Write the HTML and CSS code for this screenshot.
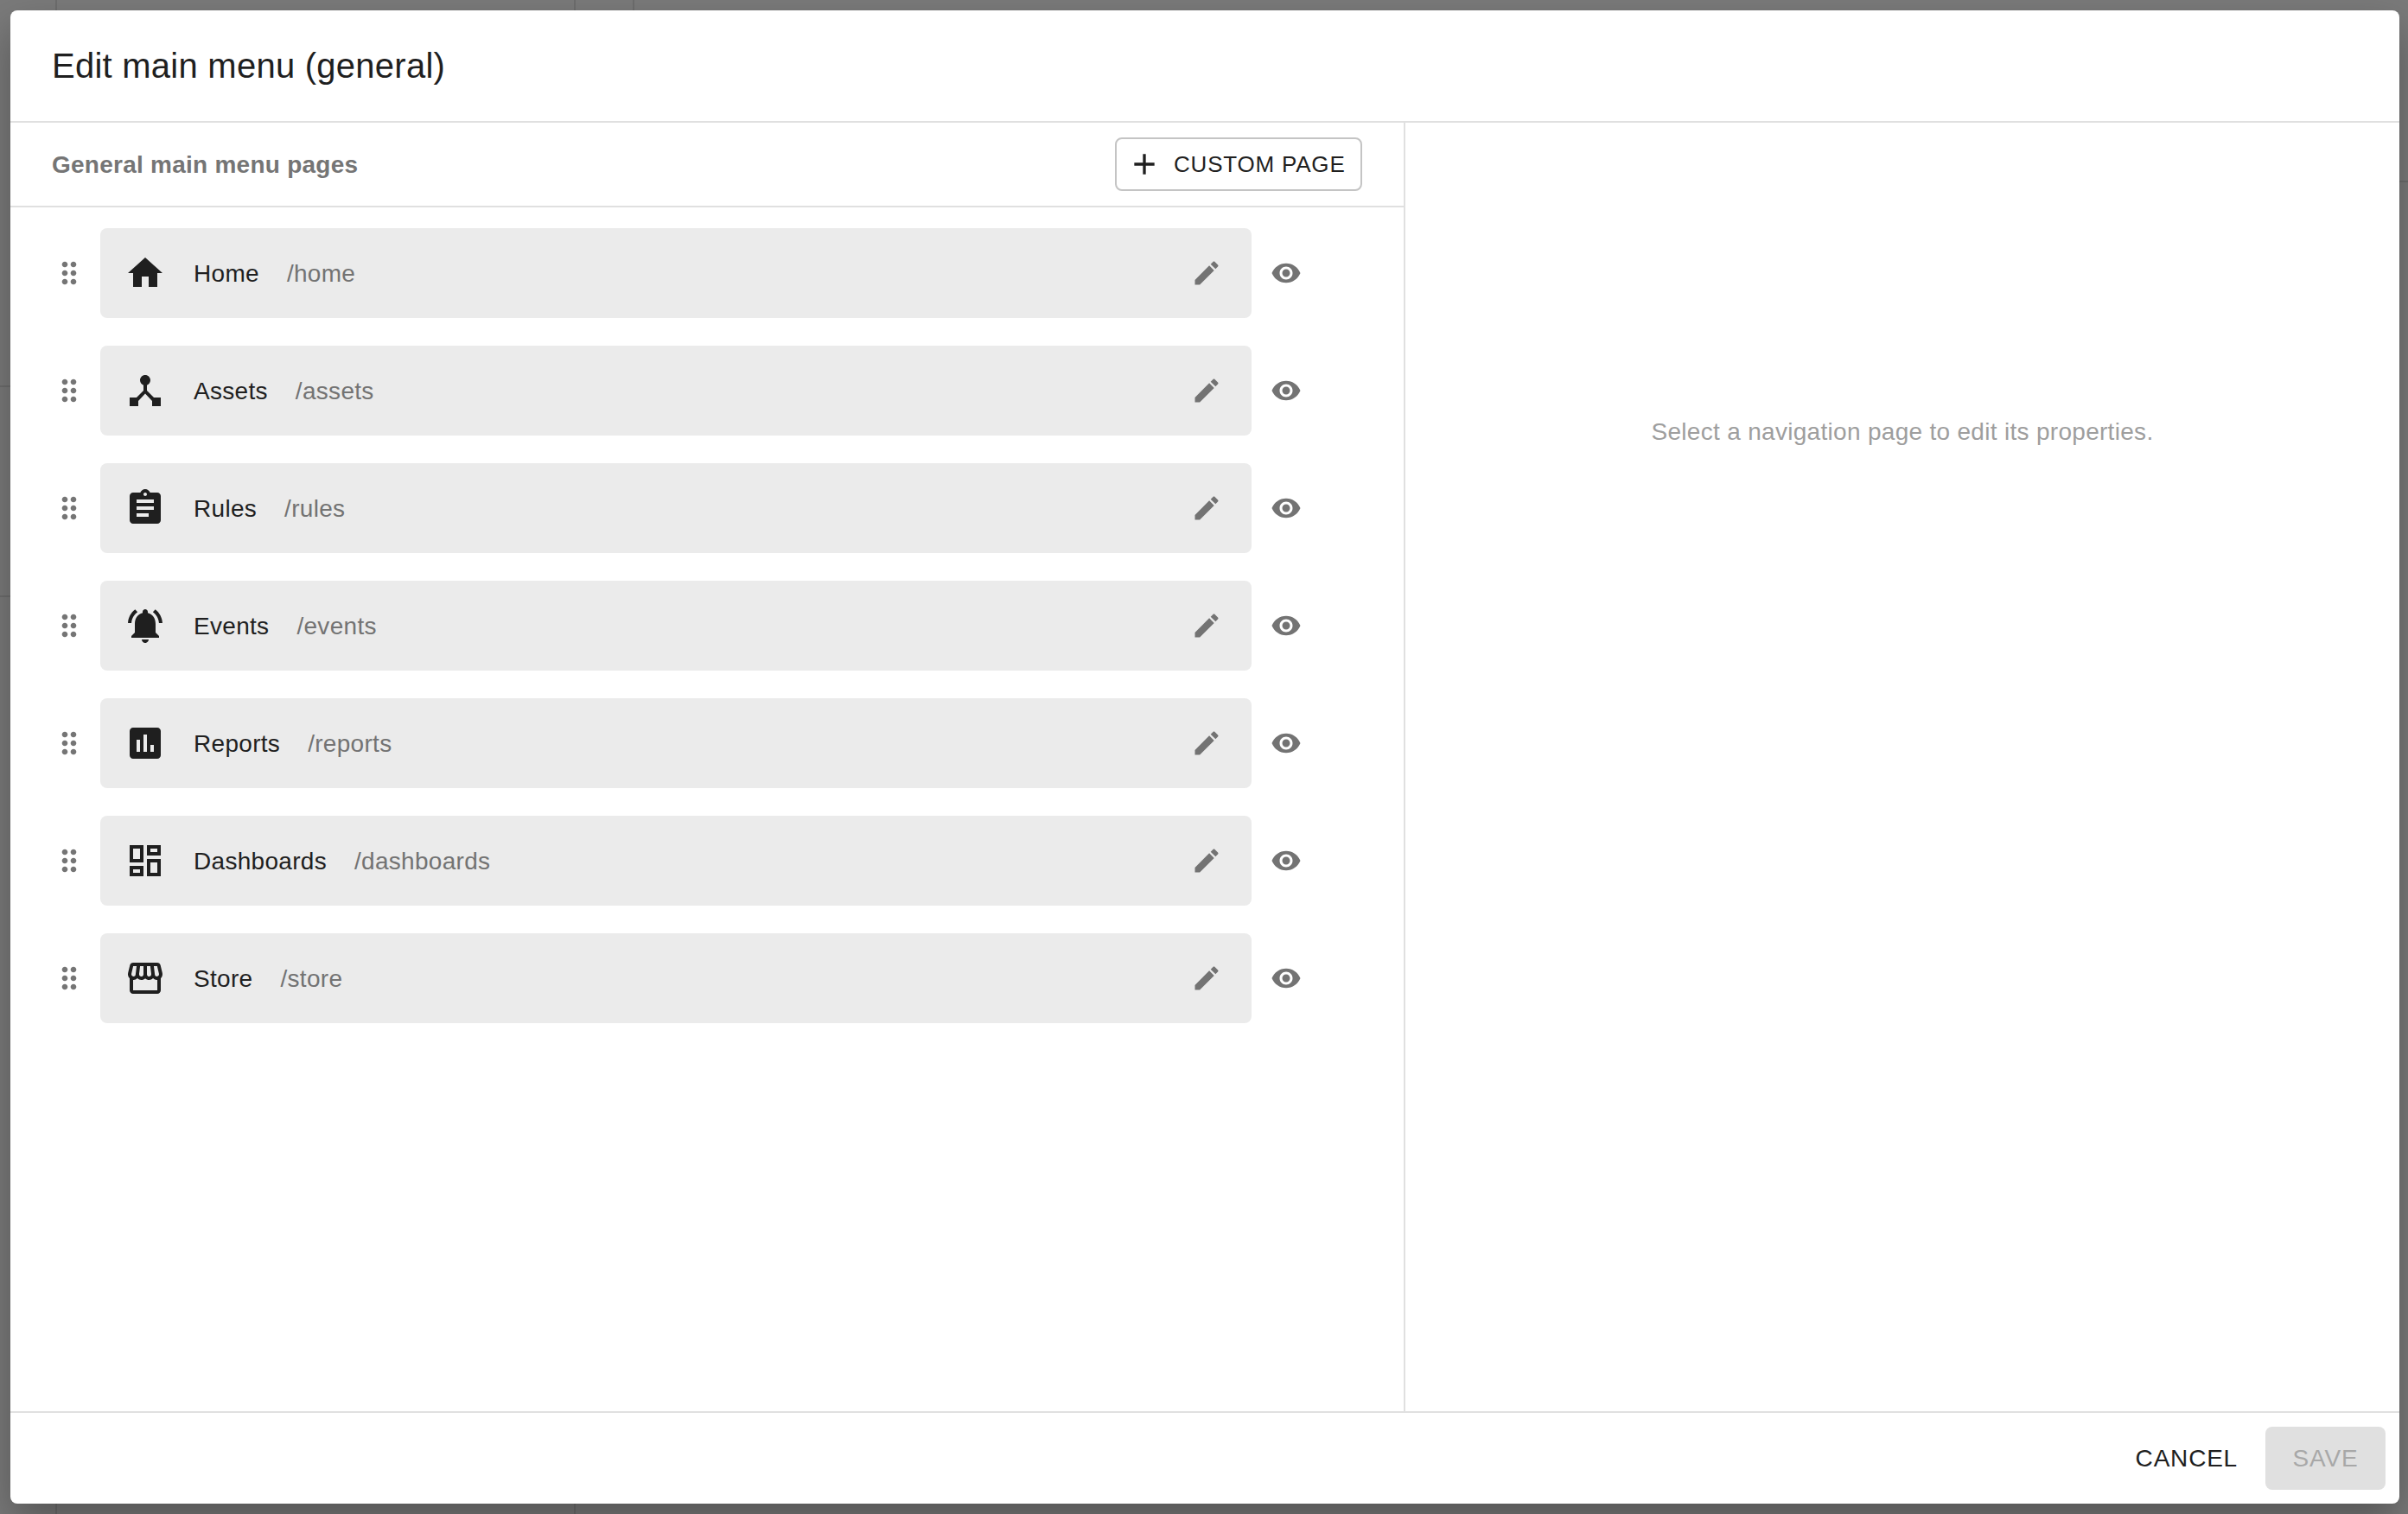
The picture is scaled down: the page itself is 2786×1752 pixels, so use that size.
FILE: index.html
```html
<!DOCTYPE html>
<html lang="en">
<head>
  <meta charset="UTF-8">
  <title>Edit main menu</title>
  <link rel="stylesheet" href="styles.css">
</head>
<body>
  <div class="backdrop">
    <div class="bg-line bg-line-a"></div>
    <div class="bg-line bg-line-b"></div>
    <div class="bg-line bg-line-c"></div>
    <div class="bg-rule bg-rule-a"></div>
    <div class="bg-rule bg-rule-b"></div>
    <div class="bg-rule bg-rule-c"></div>
    <div class="dialog">
      <div class="dialog-title">Edit main menu (general)</div>
      <div class="dialog-body">
        <div class="left-panel">
          <div class="panel-head">
            <span class="panel-label">General main menu pages</span>
            <button class="btn-outline">
              <svg class="icon-add" viewBox="0 0 24 24"><path d="M19 13h-6v6h-2v-6H5v-2h6V5h2v6h6v2z"/></svg>
              <span>CUSTOM PAGE</span>
            </button>
          </div>
          <div class="page-list">

            <div class="page-row">
              <svg class="icon-drag" viewBox="0 0 24 24"><path d="M11 18c0 1.100-.9 2-2 2s-2-.9-2-2 .9-2 2-2 2 .9 2 2zm-2-8c-1.100 0-2 .9-2 2s.9 2 2 2 2-.9 2-2-.9-2-2-2zm0-6c-1.100 0-2 .9-2 2s.9 2 2 2 2-.9 2-2-.9-2-2-2zm6 4c1.100 0 2-.9 2-2s-.9-2-2-2-2 .9-2 2 .9 2 2 2zm0 2c-1.100 0-2 .9-2 2s.9 2 2 2 2-.9 2-2-.9-2-2-2zm0 6c-1.100 0-2 .9-2 2s.9 2 2 2 2-.9 2-2-.9-2-2-2z"/></svg>
              <div class="page-card">
                <svg class="icon-page" viewBox="0 0 24 24"><path d="M10 20v-6h4v6h5v-8h3L12 3 2 12h3v8z"/></svg>
                <span class="page-name">Home</span>
                <span class="page-path">/home</span>
                <svg class="icon-edit" viewBox="0 0 24 24"><path d="M3 17.250V21h3.750L17.810 9.940l-3.750-3.750L3 17.250zM20.710 7.040c.39-.39.39-1.020 0-1.410l-2.340-2.340c-.39-.39-1.020-.39-1.410 0l-1.830 1.830 3.750 3.750 1.830-1.830z"/></svg>
              </div>
              <svg class="icon-eye" viewBox="0 0 24 24"><path d="M12 4.500C7 4.500 2.730 7.610 1 12c1.730 4.390 6 7.500 11 7.500s9.270-3.110 11-7.500c-1.730-4.390-6-7.500-11-7.500zM12 17c-2.760 0-5-2.240-5-5s2.240-5 5-5 5 2.240 5 5-2.240 5-5 5zm0-8c-1.660 0-3 1.340-3 3s1.340 3 3 3 3-1.340 3-3-1.340-3-3-3z"/></svg>
            </div>

            <div class="page-row">
              <svg class="icon-drag" viewBox="0 0 24 24"><path d="M11 18c0 1.100-.9 2-2 2s-2-.9-2-2 .9-2 2-2 2 .9 2 2zm-2-8c-1.100 0-2 .9-2 2s.9 2 2 2 2-.9 2-2-.9-2-2-2zm0-6c-1.100 0-2 .9-2 2s.9 2 2 2 2-.9 2-2-.9-2-2-2zm6 4c1.100 0 2-.9 2-2s-.9-2-2-2-2 .9-2 2 .9 2 2 2zm0 2c-1.100 0-2 .9-2 2s.9 2 2 2 2-.9 2-2-.9-2-2-2zm0 6c-1.100 0-2 .9-2 2s.9 2 2 2 2-.9 2-2-.9-2-2-2z"/></svg>
              <div class="page-card">
                <svg class="icon-page" viewBox="0 0 24 24"><path d="M17 16l-4-4V8.820C14.160 8.400 15 7.300 15 6c0-1.660-1.340-3-3-3S9 4.340 9 6c0 1.300.84 2.400 2 2.820V12l-4 4H3v5h5v-3.050l4-4.200 4 4.200V21h5v-5h-4z"/></svg>
                <span class="page-name">Assets</span>
                <span class="page-path">/assets</span>
                <svg class="icon-edit" viewBox="0 0 24 24"><path d="M3 17.250V21h3.750L17.810 9.940l-3.750-3.750L3 17.250zM20.710 7.040c.39-.39.39-1.020 0-1.410l-2.340-2.340c-.39-.39-1.020-.39-1.410 0l-1.830 1.830 3.750 3.750 1.830-1.830z"/></svg>
              </div>
              <svg class="icon-eye" viewBox="0 0 24 24"><path d="M12 4.500C7 4.500 2.730 7.610 1 12c1.730 4.390 6 7.500 11 7.500s9.270-3.110 11-7.500c-1.730-4.390-6-7.500-11-7.500zM12 17c-2.760 0-5-2.240-5-5s2.240-5 5-5 5 2.240 5 5-2.240 5-5 5zm0-8c-1.660 0-3 1.340-3 3s1.340 3 3 3 3-1.340 3-3-1.340-3-3-3z"/></svg>
            </div>

            <div class="page-row">
              <svg class="icon-drag" viewBox="0 0 24 24"><path d="M11 18c0 1.100-.9 2-2 2s-2-.9-2-2 .9-2 2-2 2 .9 2 2zm-2-8c-1.100 0-2 .9-2 2s.9 2 2 2 2-.9 2-2-.9-2-2-2zm0-6c-1.100 0-2 .9-2 2s.9 2 2 2 2-.9 2-2-.9-2-2-2zm6 4c1.100 0 2-.9 2-2s-.9-2-2-2-2 .9-2 2 .9 2 2 2zm0 2c-1.100 0-2 .9-2 2s.9 2 2 2 2-.9 2-2-.9-2-2-2zm0 6c-1.100 0-2 .9-2 2s.9 2 2 2 2-.9 2-2-.9-2-2-2z"/></svg>
              <div class="page-card">
                <svg class="icon-page" viewBox="0 0 24 24"><path d="M19 3h-4.180C14.400 1.840 13.300 1 12 1c-1.300 0-2.400.84-2.820 2H5c-1.100 0-2 .9-2 2v14c0 1.100.9 2 2 2h14c1.100 0 2-.9 2-2V5c0-1.100-.9-2-2-2zm-7 0c.55 0 1 .45 1 1s-.45 1-1 1-1-.45-1-1 .45-1 1-1zm2 14H7v-2h7v2zm3-4H7v-2h10v2zm0-4H7V7h10v2z"/></svg>
                <span class="page-name">Rules</span>
                <span class="page-path">/rules</span>
                <svg class="icon-edit" viewBox="0 0 24 24"><path d="M3 17.250V21h3.750L17.810 9.940l-3.750-3.750L3 17.250zM20.710 7.040c.39-.39.39-1.020 0-1.410l-2.340-2.340c-.39-.39-1.020-.39-1.410 0l-1.830 1.830 3.750 3.750 1.830-1.830z"/></svg>
              </div>
              <svg class="icon-eye" viewBox="0 0 24 24"><path d="M12 4.500C7 4.500 2.730 7.610 1 12c1.730 4.390 6 7.500 11 7.500s9.270-3.110 11-7.500c-1.730-4.390-6-7.500-11-7.500zM12 17c-2.760 0-5-2.240-5-5s2.240-5 5-5 5 2.240 5 5-2.240 5-5 5zm0-8c-1.660 0-3 1.340-3 3s1.340 3 3 3 3-1.340 3-3-1.340-3-3-3z"/></svg>
            </div>

            <div class="page-row">
              <svg class="icon-drag" viewBox="0 0 24 24"><path d="M11 18c0 1.100-.9 2-2 2s-2-.9-2-2 .9-2 2-2 2 .9 2 2zm-2-8c-1.100 0-2 .9-2 2s.9 2 2 2 2-.9 2-2-.9-2-2-2zm0-6c-1.100 0-2 .9-2 2s.9 2 2 2 2-.9 2-2-.9-2-2-2zm6 4c1.100 0 2-.9 2-2s-.9-2-2-2-2 .9-2 2 .9 2 2 2zm0 2c-1.100 0-2 .9-2 2s.9 2 2 2 2-.9 2-2-.9-2-2-2zm0 6c-1.100 0-2 .9-2 2s.9 2 2 2 2-.9 2-2-.9-2-2-2z"/></svg>
              <div class="page-card">
                <svg class="icon-page" viewBox="0 0 24 24"><path d="M7.580 4.080L6.150 2.650C3.750 4.480 2.170 7.300 2.030 10.500h2c.15-2.650 1.510-4.970 3.550-6.420zm12.390 6.420h2c-.15-3.200-1.730-6.020-4.120-7.850l-1.420 1.430c2.020 1.450 3.390 3.770 3.540 6.420zM18 11c0-3.070-1.640-5.640-4.500-6.320V4c0-.83-.67-1.500-1.500-1.500s-1.500.67-1.500 1.500v.68C7.630 5.360 6 7.920 6 11v5l-2 2v1h16v-1l-2-2v-5zm-6 11c.14 0 .27-.01.4-.04.65-.14 1.180-.58 1.440-1.180.1-.24.15-.5.15-.78h-4c.01 1.100.9 2 2.010 2z"/></svg>
                <span class="page-name">Events</span>
                <span class="page-path">/events</span>
                <svg class="icon-edit" viewBox="0 0 24 24"><path d="M3 17.250V21h3.750L17.810 9.940l-3.750-3.750L3 17.250zM20.710 7.040c.39-.39.39-1.020 0-1.410l-2.340-2.340c-.39-.39-1.020-.39-1.410 0l-1.830 1.830 3.750 3.750 1.830-1.830z"/></svg>
              </div>
              <svg class="icon-eye" viewBox="0 0 24 24"><path d="M12 4.500C7 4.500 2.730 7.610 1 12c1.730 4.390 6 7.500 11 7.500s9.270-3.110 11-7.500c-1.730-4.390-6-7.500-11-7.500zM12 17c-2.760 0-5-2.240-5-5s2.240-5 5-5 5 2.240 5 5-2.240 5-5 5zm0-8c-1.660 0-3 1.340-3 3s1.340 3 3 3 3-1.340 3-3-1.340-3-3-3z"/></svg>
            </div>

            <div class="page-row">
              <svg class="icon-drag" viewBox="0 0 24 24"><path d="M11 18c0 1.100-.9 2-2 2s-2-.9-2-2 .9-2 2-2 2 .9 2 2zm-2-8c-1.100 0-2 .9-2 2s.9 2 2 2 2-.9 2-2-.9-2-2-2zm0-6c-1.100 0-2 .9-2 2s.9 2 2 2 2-.9 2-2-.9-2-2-2zm6 4c1.100 0 2-.9 2-2s-.9-2-2-2-2 .9-2 2 .9 2 2 2zm0 2c-1.100 0-2 .9-2 2s.9 2 2 2 2-.9 2-2-.9-2-2-2zm0 6c-1.100 0-2 .9-2 2s.9 2 2 2 2-.9 2-2-.9-2-2-2z"/></svg>
              <div class="page-card">
                <svg class="icon-page" viewBox="0 0 24 24"><path d="M19 3H5c-1.100 0-2 .9-2 2v14c0 1.100.9 2 2 2h14c1.100 0 2-.9 2-2V5c0-1.100-.9-2-2-2zM9 17H7v-7h2v7zm4 0h-2V7h2v10zm4 0h-2v-4h2v4z"/></svg>
                <span class="page-name">Reports</span>
                <span class="page-path">/reports</span>
                <svg class="icon-edit" viewBox="0 0 24 24"><path d="M3 17.250V21h3.750L17.810 9.940l-3.750-3.750L3 17.250zM20.710 7.040c.39-.39.39-1.020 0-1.410l-2.340-2.340c-.39-.39-1.020-.39-1.410 0l-1.830 1.830 3.750 3.750 1.830-1.830z"/></svg>
              </div>
              <svg class="icon-eye" viewBox="0 0 24 24"><path d="M12 4.500C7 4.500 2.730 7.610 1 12c1.730 4.390 6 7.500 11 7.500s9.270-3.110 11-7.500c-1.730-4.390-6-7.500-11-7.500zM12 17c-2.760 0-5-2.240-5-5s2.240-5 5-5 5 2.240 5 5-2.240 5-5 5zm0-8c-1.660 0-3 1.340-3 3s1.340 3 3 3 3-1.340 3-3-1.340-3-3-3z"/></svg>
            </div>

            <div class="page-row">
              <svg class="icon-drag" viewBox="0 0 24 24"><path d="M11 18c0 1.100-.9 2-2 2s-2-.9-2-2 .9-2 2-2 2 .9 2 2zm-2-8c-1.100 0-2 .9-2 2s.9 2 2 2 2-.9 2-2-.9-2-2-2zm0-6c-1.100 0-2 .9-2 2s.9 2 2 2 2-.9 2-2-.9-2-2-2zm6 4c1.100 0 2-.9 2-2s-.9-2-2-2-2 .9-2 2 .9 2 2 2zm0 2c-1.100 0-2 .9-2 2s.9 2 2 2 2-.9 2-2-.9-2-2-2zm0 6c-1.100 0-2 .9-2 2s.9 2 2 2 2-.9 2-2-.9-2-2-2z"/></svg>
              <div class="page-card">
                <svg class="icon-page" viewBox="0 0 24 24"><path d="M19 5v2h-4V5h4M9 5v6H5V5h4m10 8v6h-4v-6h4M9 17v2H5v-2h4M21 3h-8v6h8V3zM11 3H3v10h8V3zm10 8h-8v10h8V11zm-10 4H3v6h8v-6z"/></svg>
                <span class="page-name">Dashboards</span>
                <span class="page-path">/dashboards</span>
                <svg class="icon-edit" viewBox="0 0 24 24"><path d="M3 17.250V21h3.750L17.810 9.940l-3.750-3.750L3 17.250zM20.710 7.040c.39-.39.39-1.020 0-1.410l-2.340-2.340c-.39-.39-1.020-.39-1.410 0l-1.830 1.830 3.750 3.750 1.830-1.830z"/></svg>
              </div>
              <svg class="icon-eye" viewBox="0 0 24 24"><path d="M12 4.500C7 4.500 2.730 7.610 1 12c1.730 4.390 6 7.500 11 7.500s9.270-3.110 11-7.500c-1.730-4.390-6-7.500-11-7.500zM12 17c-2.760 0-5-2.240-5-5s2.240-5 5-5 5 2.240 5 5-2.240 5-5 5zm0-8c-1.660 0-3 1.340-3 3s1.340 3 3 3 3-1.340 3-3-1.340-3-3-3z"/></svg>
            </div>

            <div class="page-row">
              <svg class="icon-drag" viewBox="0 0 24 24"><path d="M11 18c0 1.100-.9 2-2 2s-2-.9-2-2 .9-2 2-2 2 .9 2 2zm-2-8c-1.100 0-2 .9-2 2s.9 2 2 2 2-.9 2-2-.9-2-2-2zm0-6c-1.100 0-2 .9-2 2s.9 2 2 2 2-.9 2-2-.9-2-2-2zm6 4c1.100 0 2-.9 2-2s-.9-2-2-2-2 .9-2 2 .9 2 2 2zm0 2c-1.100 0-2 .9-2 2s.9 2 2 2 2-.9 2-2-.9-2-2-2zm0 6c-1.100 0-2 .9-2 2s.9 2 2 2 2-.9 2-2-.9-2-2-2z"/></svg>
              <div class="page-card">
                <svg class="icon-page" viewBox="0 0 24 24"><path d="M21.900 8.890l-1.050-4.370c-.22-.9-1-1.520-1.910-1.520H5.050C4.150 3 3.360 3.630 3.150 4.520L2.100 8.890c-.24 1.020-.02 2.060.62 2.880.08.11.19.19.28.29V19c0 1.100.9 2 2 2h14c1.100 0 2-.9 2-2v-6.940c.09-.09.2-.18.28-.28.64-.82.87-1.870.62-2.890zM18.910 4.990l1.050 4.370c.1.42.01.84-.25 1.170-.14.18-.44.47-.94.47-.61 0-1.140-.49-1.210-1.140L16.980 5l1.930-.01zM13 5h1.960l.54 4.520c.05.39-.07.78-.33 1.070-.22.26-.54.41-.95.41-.67 0-1.220-.59-1.220-1.310V5zM8.490 9.520L9.040 5H11v4.690C11 10.410 10.450 11 9.710 11c-.34 0-.65-.15-.89-.41-.25-.29-.37-.68-.33-1.070zM4.040 9.360L5.050 5h1.970l-.58 4.860c-.08.65-.6 1.140-1.210 1.140-.49 0-.8-.29-.93-.47-.27-.32-.36-.75-.26-1.170zM5 19v-6.030c.08.01.15.03.23.03.87 0 1.660-.36 2.240-.95.6.6 1.400.95 2.310.95.87 0 1.650-.36 2.230-.93.59.57 1.390.93 2.290.93.84 0 1.640-.35 2.240-.95.58.59 1.370.95 2.240.95.08 0 .15-.02.23-.03V19H5z"/></svg>
                <span class="page-name">Store</span>
                <span class="page-path">/store</span>
                <svg class="icon-edit" viewBox="0 0 24 24"><path d="M3 17.250V21h3.750L17.810 9.940l-3.750-3.750L3 17.250zM20.710 7.040c.39-.39.39-1.020 0-1.410l-2.340-2.340c-.39-.39-1.020-.39-1.410 0l-1.830 1.830 3.750 3.750 1.830-1.830z"/></svg>
              </div>
              <svg class="icon-eye" viewBox="0 0 24 24"><path d="M12 4.500C7 4.500 2.730 7.610 1 12c1.730 4.390 6 7.500 11 7.500s9.270-3.110 11-7.500c-1.730-4.390-6-7.500-11-7.500zM12 17c-2.760 0-5-2.240-5-5s2.240-5 5-5 5 2.240 5 5-2.240 5-5 5zm0-8c-1.660 0-3 1.340-3 3s1.340 3 3 3 3-1.340 3-3-1.340-3-3-3z"/></svg>
            </div>

          </div>
        </div>
        <div class="right-panel">Select a navigation page to edit its properties.</div>
      </div>
      <div class="dialog-footer">
        <button class="btn-text">CANCEL</button>
        <button class="btn-disabled">SAVE</button>
      </div>
    </div>
  </div>
</body>
</html>
```

FILE: styles.css
```css
* {
  box-sizing: border-box;
}
html, body {
  margin: 0;
  height: 100%;
}
body {
  font-family: "Liberation Sans", Arial, sans-serif;
  color: #1f1f1f;
}
button {
  font-family: inherit;
  border: 0;
  background: none;
  padding: 0;
}
.backdrop {
  position: relative;
  height: 1752px;
  padding: 12px 10px 12px 12px;
  background: #7a7a7a;
  overflow: hidden;
}
.bg-line {
  position: absolute;
  top: 0;
  bottom: 0;
  width: 2px;
  background: rgba(0, 0, 0, 0.1);
}
.bg-line-a {
  left: 64px;
}
.bg-line-b {
  left: 664px;
}
.bg-line-c {
  left: 732px;
  bottom: 50%;
}
.bg-rule {
  position: absolute;
  height: 2px;
  width: 14px;
  background: rgba(0, 0, 0, 0.1);
}
.bg-rule-a {
  left: 0;
  top: 446px;
}
.bg-rule-b {
  left: 0;
  top: 689px;
}
.bg-rule-c {
  right: 0;
  top: 209px;
}
.dialog {
  position: relative;
  display: flex;
  flex-direction: column;
  height: 1728px;
  background: #fff;
  border-radius: 8px;
  box-shadow: 0 22px 48px rgba(0, 0, 0, 0.3);
}
.dialog-title {
  height: 130px;
  padding: 0 48px;
  border-bottom: 2px solid #e0e0e0;
  display: flex;
  align-items: center;
  font-size: 40px;
  letter-spacing: 0.25px;
}
.dialog-body {
  flex: 1;
  display: flex;
  min-height: 0;
}
.left-panel {
  width: 1614px;
  border-right: 2px solid #e0e0e0;
}
.panel-head {
  height: 98px;
  padding: 0 48px;
  border-bottom: 2px solid #e0e0e0;
  display: flex;
  align-items: center;
  justify-content: space-between;
}
.panel-label {
  padding-top: 2px;
  font-size: 28px;
  font-weight: bold;
  letter-spacing: 0.25px;
  color: #757575;
}
.btn-outline {
  width: 286px;
  height: 62px;
  border: 2px solid #c4c4c4;
  border-radius: 8px;
  display: flex;
  align-items: center;
  padding-left: 12px;
  font-size: 26px;
  color: #1f1f1f;
  letter-spacing: 0.8px;
}
.icon-add {
  width: 40px;
  height: 40px;
  margin-right: 14px;
  fill: #1f1f1f;
}
.page-list {
  padding: 24px 0 0 48px;
  display: flex;
  flex-direction: column;
  gap: 32px;
}
.page-row {
  display: flex;
  align-items: center;
}
.icon-drag {
  width: 40px;
  height: 40px;
  fill: #757575;
  margin-right: 16px;
}
.page-card {
  width: 1332px;
  height: 104px;
  padding: 0 34px 0 28px;
  background: #ebebeb;
  border-radius: 8px;
  display: flex;
  align-items: center;
}
.icon-page {
  width: 48px;
  height: 48px;
  fill: #1f1f1f;
  margin-right: 32px;
}
.page-name {
  padding-top: 2px;
  font-size: 28px;
  letter-spacing: 0.3px;
  margin-right: 32px;
}
.page-path {
  padding-top: 2px;
  font-size: 28px;
  letter-spacing: 0.3px;
  color: #737373;
}
.icon-edit {
  width: 36px;
  height: 36px;
  fill: #737373;
  margin-left: auto;
}
.icon-eye {
  width: 36px;
  height: 36px;
  fill: #737373;
  margin-left: 22px;
}
.right-panel {
  flex: 1;
  padding-top: 342px;
  text-align: center;
  font-size: 28px;
  letter-spacing: 0.3px;
  color: #9e9e9e;
}
.dialog-footer {
  height: 107px;
  border-top: 2px solid #e0e0e0;
  display: flex;
  align-items: center;
  justify-content: flex-end;
  padding-right: 16px;
}
.btn-text {
  font-size: 28px;
  letter-spacing: 0.8px;
  color: #1f1f1f;
  margin-right: 32px;
}
.btn-disabled {
  width: 139px;
  height: 73px;
  border-radius: 8px;
  background: #e0e0e0;
  color: #a8a8a8;
  font-size: 28px;
  letter-spacing: 0.8px;
}
```
